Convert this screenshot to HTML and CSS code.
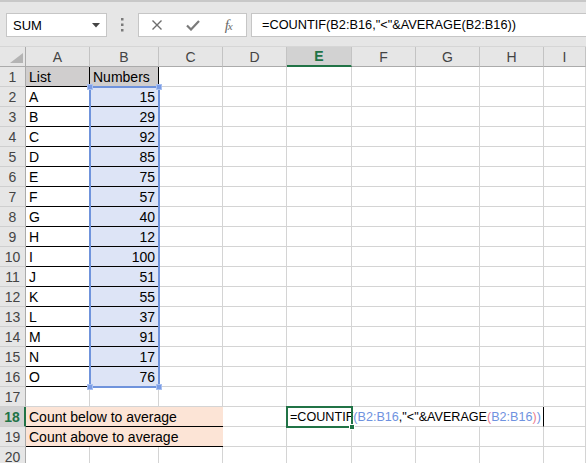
FILE: index.html
```html
<!DOCTYPE html>
<html lang="en">

<head>
    <meta charset="UTF-8" />
    <title>COUNTIF below average</title>
    <link rel="stylesheet" href="styles.css">
</head>

<body>

    <div class="toolbar">
        <div class="name-box">
            <span>SUM</span>
            <svg width="8" height="5" viewBox="0 0 8 5"><polygon points="0,0 8,0 4,4.5" fill="#444" /></svg>
        </div>
        <div class="grip">
            <svg width="3" height="14" viewBox="0 0 3 14">
                <rect x="0" y="0" width="2.5" height="2.5" fill="#7a7a7a" />
                <rect x="0" y="5.5" width="2.5" height="2.5" fill="#7a7a7a" />
                <rect x="0" y="11" width="2.5" height="2.5" fill="#7a7a7a" />
            </svg>
        </div>
        <div class="fx-box">
            <span class="fx-slot">
                <svg width="12" height="12" viewBox="0 0 12 12"><path d="M1.5 1.5 L10.5 10.5 M10.5 1.5 L1.5 10.5" stroke="#6d6d6d" stroke-width="1.4" fill="none" /></svg>
            </span>
            <span class="fx-slot">
                <svg width="14" height="11" viewBox="0 0 14 11"><path d="M1 5.5 L5 9.5 L13 1" stroke="#7a7a7a" stroke-width="2.2" fill="none" /></svg>
            </span>
            <span class="fx-slot fx-text"><i>f<span>x</span></i></span>
        </div>
        <div class="formula-box">=COUNTIF(B2:B16,"&lt;"&amp;AVERAGE(B2:B16))</div>
    </div>

    <div class="sheet" id="sheet"></div>

    <script>
        const sheet = document.getElementById('sheet');
        const cols = 'ABCDEFGHI'.split('');
        const list = 'ABCDEFGHIJKLMNO'.split('');
        const nums = [15, 29, 92, 85, 75, 57, 40, 12, 100, 51, 55, 37, 91, 17, 76];

        function add(cls, html) {
            const d = document.createElement('div');
            d.className = cls;
            if (html) d.innerHTML = html;
            sheet.appendChild(d);
            return d;
        }

        add('corner', '<svg width="26" height="20" viewBox="0 0 26 20"><polygon points="23,6 23,16 10,16" fill="#b4b4b4" /></svg>');
        cols.forEach(c => add('col-head' + (c === 'E' ? ' active' : ''), c));

        for (let r = 1; r <= 20; r++) {
            add('row-head' + (r === 18 ? ' active' : ''), String(r));

            if (r === 18 || r === 19) {
                add('cell fill wide', r === 18 ? 'Count below to average' : 'Count above to average');
                add('cell');
                if (r === 18) {
                    add('cell formula',
                        '=COUNTIF<span class="ref">(B2:B16</span>,"&lt;"&amp;AVERAGE<span class="paren">(</span><span class="ref">B2:B16</span><span class="paren">)</span><span class="ref">)</span>');
                } else {
                    add('cell'); add('cell'); add('cell'); add('cell');
                }
                add('cell');
                continue;
            }

            cols.forEach(c => {
                if (r === 1 && c === 'A') add('cell title', 'List');
                else if (r === 1 && c === 'B') add('cell title', 'Numbers');
                else if (r <= 16 && c === 'A') add('cell boxed', list[r - 2]);
                else if (r <= 16 && c === 'B') add('cell boxed num', String(nums[r - 2]));
                else add('cell');
            });
        }

        add('selection', '<i class="h tl"></i><i class="h tr"></i><i class="h bl"></i><i class="h br"></i>');
        add('active-cell', '<i class="handle"></i>');
    </script>
</body>

</html>
```

FILE: styles.css
```css
* {
    margin: 0;
    padding: 0;
    box-sizing: border-box;
}

body {
    width: 586px;
    height: 463px;
    overflow: hidden;
    background: #fff;
    color: #000;
    font-family: 'Liberation Sans', Arial, sans-serif;
}

/* formula bar */

.toolbar {
    height: 47px;
    display: flex;
    align-items: flex-start;
    padding: 11px 0 0 6px;
    background: #e6e6e6;
    border-top: 2px solid #c8c8c8;
    border-bottom: 1px solid #d6d6d6;
}

.name-box {
    width: 101px;
    height: 24px;
    display: flex;
    align-items: center;
    padding: 0 6px 0 6px;
    background: #fff;
    border: 1px solid #c6c6c6;
    font-size: 13px;
}

.name-box span {
    flex: 1;
}

.grip {
    width: 31px;
    height: 24px;
    display: flex;
    align-items: center;
    justify-content: center;
}

.grip svg,
.name-box svg,
.fx-slot svg {
    display: block;
}

.fx-box {
    width: 109px;
    height: 24px;
    display: flex;
    align-items: center;
    background: #fff;
    border: 1px solid #c6c6c6;
}

.fx-slot {
    width: 36px;
    display: flex;
    justify-content: center;
}

.fx-text i {
    font-family: 'Liberation Serif', 'Times New Roman', serif;
    font-size: 15px;
    color: #6a6a6a;
    letter-spacing: -1px;
}

.fx-text span {
    font-size: 11px;
}

.formula-box {
    flex: 1;
    height: 24px;
    margin-left: 4px;
    padding-left: 10px;
    background: #fff;
    border: 1px solid #c6c6c6;
    border-right: none;
    font-size: 12.75px;
    line-height: 22px;
    white-space: nowrap;
}

/* grid */

.sheet {
    position: relative;
    display: grid;
    grid-template-columns: 26px 64px 69px 64px 64px 65px 64px 64px 64px 42px;
    grid-auto-rows: 20px;
}

.corner,
.col-head,
.row-head {
    background: #e6e6e6;
    color: #444;
    font-size: 14px;
    line-height: 20px;
    text-align: center;
}

.corner {
    border-right: 1px solid #ababab;
    border-bottom: 1px solid #ababab;
}

.corner svg {
    display: block;
}

.col-head {
    border-right: 1px solid #c3c3c3;
    border-bottom: 1px solid #ababab;
}

.row-head {
    border-right: 1px solid #ababab;
    border-bottom: 1px solid #cfcfcf;
    line-height: 21px;
}

.col-head.active {
    background: #d2d2d2;
    color: #217346;
    font-weight: bold;
    border-bottom: 2px solid #217346;
    line-height: 19px;
}

.row-head.active {
    background: #d2d2d2;
    color: #217346;
    font-weight: bold;
    border-right: 2px solid #217346;
}

.cell {
    padding: 0 3px;
    border-right: 1px solid #d4d4d4;
    border-bottom: 1px solid #d4d4d4;
    font-size: 14px;
    line-height: 21px;
    white-space: nowrap;
}

.title {
    background: #d0cece;
    border-right-color: #000;
    border-bottom-color: #000;
}

.boxed {
    border-bottom-color: #000;
}

.num {
    background: #dde4f6;
    text-align: right;
}

.fill {
    background: #fce4d6;
    border-bottom-color: #000;
}

.wide {
    grid-column: span 3;
    border-right: none;
}

.formula {
    grid-column: span 4;
    border-right-color: #000;
    font-size: 12.6px;
}

.ref {
    color: #6f92e0;
}

.paren {
    color: #ec7d8f;
}

/* overlays */

.selection {
    position: absolute;
    grid-column: 3 / 4;
    grid-row: 3 / 18;
    inset: -1px -1px -1px -1px;
    border: 2px solid #6f93dc;
}

.h {
    position: absolute;
    width: 6px;
    height: 6px;
    background: #7b9de6;
    border: 1px solid #a9c0f0;
}

.tl { left: -4px; top: -4px; }
.tr { right: -4px; top: -4px; }
.bl { left: -4px; bottom: -4px; }
.br { right: -4px; bottom: -4px; }

.active-cell {
    position: absolute;
    grid-column: 6 / 7;
    grid-row: 19 / 20;
    inset: -1px -1px -1px -1px;
    border: 2px solid #217346;
}

.handle {
    position: absolute;
    right: -4px;
    bottom: -4px;
    width: 6px;
    height: 6px;
    background: #217346;
    border: 1px solid #fff;
}
```
